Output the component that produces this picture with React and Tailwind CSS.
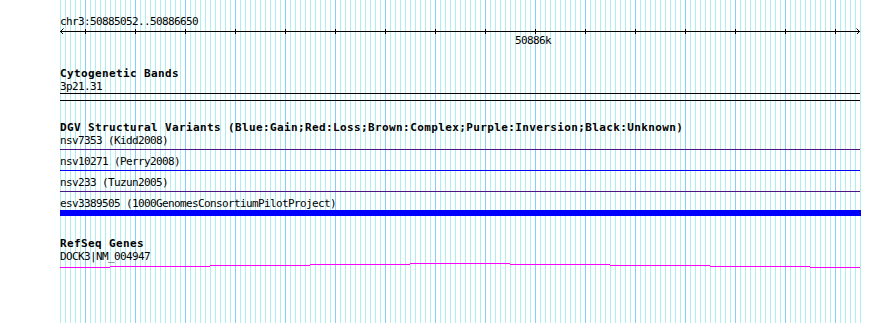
const mono = "font-['DejaVu_Sans_Mono','Liberation_Mono',monospace]";
const small = `${mono} text-[11px] leading-[13px] h-[13px] tracking-[-0.62px] text-black whitespace-nowrap`;
const bold = `${mono} text-[11px] leading-[13px] h-[13px] tracking-[0.38px] font-bold text-black whitespace-nowrap`;

const gridLines = Array.from({ length: 161 }, (_, i) => 60 + i * 5);
const ticks = Array.from({ length: 16 }, (_, i) => 85 + i * 50);

// gene segments: [x1, x2, row]
const geneSegs = [
  [60, 110, 267],
  [110, 210, 266],
  [210, 310, 265],
  [310, 410, 264],
  [410, 510, 263],
  [510, 610, 264],
  [610, 710, 265],
  [710, 810, 266],
  [810, 860, 267],
];

const variants = [
  { label: "nsv7353 (Kidd2008)", line: "bg-[#4b1585]" },
  { label: "nsv10271 (Perry2008)", line: "bg-[#0000ff]" },
  { label: "nsv233 (Tuzun2005)", line: "bg-[#4b1585]" },
];

function Grid() {
  return (
    <svg className="absolute left-0 top-0" width="890" height="323">
      {gridLines.map((x) => {
        const major = (x - 85) % 50 === 0;
        return (
          <line
            key={x}
            x1={x + 0.5}
            x2={x + 0.5}
            y1="0"
            y2="323"
            stroke={major ? "#87cefa" : "#afeeee"}
            strokeWidth="1"
          />
        );
      })}
    </svg>
  );
}

function Ruler() {
  return (
    <svg width="801" height="6" className="block">
      <line x1="0" x2="800" y1="3.5" y2="3.5" stroke="#000" />
      <path d="M3.5 0.5 L0.5 3.5 L3.5 6.5" fill="none" stroke="#000" />
      <path d="M796.5 0.5 L799.5 3.5 L796.5 6.5" fill="none" stroke="#000" />
      {ticks.map((x) => (
        <line key={x} x1={x - 60 + 0.5} x2={x - 60 + 0.5} y1="1" y2="6" stroke="#000" />
      ))}
    </svg>
  );
}

function GeneLine() {
  return (
    <svg width="801" height="6" className="block">
      {geneSegs.map(([a, b, r]) => (
        <line key={a} x1={a - 60} x2={b - 60} y1={r - 263 + 0.5} y2={r - 263 + 0.5} stroke="#ff00ff" />
      ))}
    </svg>
  );
}

export default function App() {
  return (
    <div className="relative w-[890px] h-[323px] bg-white overflow-hidden">
      <Grid />
      <div className="relative flex flex-col pl-[60px] pt-[15px] w-[861px]">
        {/* ruler */}
        <div className={small}>chr3:50885052..50886650</div>
        <Ruler />
        <div className={`${small} ml-[455px]`}>50886k</div>

        {/* cytogenetic bands */}
        <div className={`${bold} mt-[20px]`}>Cytogenetic Bands</div>
        <div className={small}>3p21.31</div>
        <div className="w-[800px] h-[8px] border-y border-black" />

        {/* DGV */}
        <div className={`${bold} mt-[20px]`}>
          DGV Structural Variants (Blue:Gain;Red:Loss;Brown:Complex;Purple:Inversion;Black:Unknown)
        </div>
        {variants.map((v) => (
          <div key={v.label} className="flex flex-col">
            <div className={small}>{v.label}</div>
            <div className={`w-[800px] h-px mt-[2px] mb-[5px] ${v.line}`} />
          </div>
        ))}
        <div className={small}>esv3389505 (1000GenomesConsortiumPilotProject)</div>
        <div className="w-[801px] h-[6px] bg-[#0000ff]" />

        {/* RefSeq */}
        <div className={`${bold} mt-[21px]`}>RefSeq Genes</div>
        <div className={small}>DOCK3|NM_004947</div>
        <GeneLine />
      </div>
    </div>
  );
}
